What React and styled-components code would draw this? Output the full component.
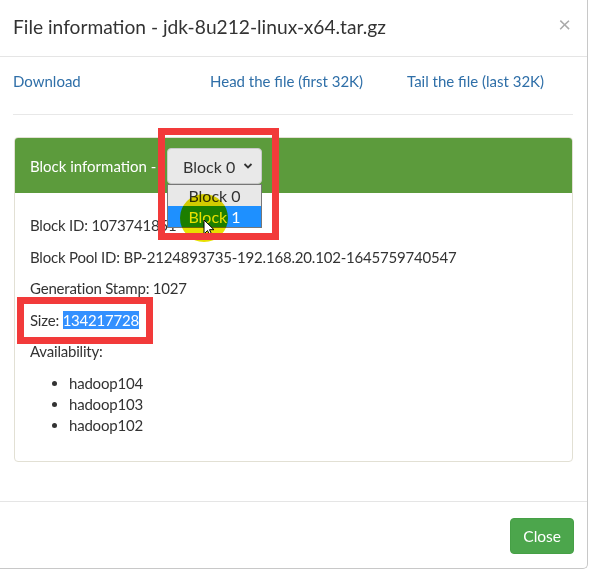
import styled, { createGlobalStyle } from "styled-components";

const GlobalStyle = createGlobalStyle`
  body {
    margin: 0;
    background: #fff;
    font-family: Lato, "Open Sans", sans-serif;
    color: #333;
  }
`;

const Modal = styled.div`
  width: 587px;
  height: 568px;
  display: flex;
  flex-direction: column;
  border-right: 1px solid #c8c8c8;
  border-bottom: 1px solid #c8c8c8;
  border-bottom-right-radius: 5px;
  background: #fff;
`;

const Header = styled.div`
  height: 56px;
  padding: 0 16px 0 13px;
  display: flex;
  align-items: center;
  justify-content: space-between;
  border-bottom: 1px solid #e5e5e5;
`;

const Title = styled.h4`
  margin: 0 0 4px;
  font-size: 19.2px;
  font-weight: 400;
  color: #333;
`;

const CloseX = styled.span`
  font-size: 22px;
  color: #aaa;
  line-height: 1;
  margin-bottom: 8px;
`;

const Body = styled.div`
  flex: 1;
  padding: 14px 14px 0 13px;
`;

const LinkRow = styled.div`
  display: grid;
  grid-template-columns: repeat(3, 197px);
  line-height: 21px;
`;

const Link = styled.a`
  color: #2f6fa8;
  font-size: 15px;
  text-decoration: none;
`;

const Rule = styled.hr`
  margin: 22px 0 22px;
  border: 0;
  border-top: 1px solid #e8e8e8;
`;

const Panel = styled.div`
  margin-left: 1px;
  border: 1px solid #e2e0d4;
  border-radius: 4px;
`;

const PanelHeading = styled.div`
  height: 55px;
  background: #5c9b3c;
  border-radius: 3px 3px 0 0;
  display: flex;
  align-items: center;
  padding: 0 15px;
  color: #fff;
  font-size: 15px;
`;

const HeadingText = styled.span`
  width: 137px;
  white-space: nowrap;
  overflow: hidden;
`;

const SelectWrap = styled.div`
  position: relative;
  margin-top: 1px;
`;

const Select = styled.div`
  width: 95px;
  height: 36px;
  box-sizing: border-box;
  background: #e9e9e9;
  border: 1px solid #c9c9c9;
  border-radius: 4px;
  display: flex;
  align-items: center;
  justify-content: space-between;
  padding: 0 8px 0 15px;
  color: #333;
  font-size: 16px;
`;

const Options = styled.div`
  position: absolute;
  top: 36px;
  left: 0;
  width: 95px;
  box-sizing: border-box;
  border: 1px solid #777;
  background: #e8e8e8;
  z-index: 2;
`;

const Option = styled.div`
  height: 21px;
  line-height: 21px;
  text-align: center;
  font-size: 16px;
  color: ${({ $active }) => ($active ? "#fff" : "#333")};
  background: ${({ $active }) => ($active ? "#1e90ff" : "transparent")};
`;

const Highlight = styled.div`
  position: absolute;
  left: 13px;
  top: 46px;
  width: 48px;
  height: 48px;
  border-radius: 50%;
  background: #e8e000;
  mix-blend-mode: multiply;
  z-index: 3;
  pointer-events: none;
`;

const Cursor = styled.svg`
  position: absolute;
  left: 36px;
  top: 71px;
  z-index: 4;
`;

const RedBox = styled.div`
  position: absolute;
  border: 7px solid #f23a3a;
  z-index: 5;
  pointer-events: none;
`;

const PanelBody = styled.div`
  padding: 22px 15px 15px;
  font-size: 15px;
  letter-spacing: -0.2px;
  line-height: 21px;
`;

const Line = styled.p`
  margin: 0 0 10.5px;
`;

const Marked = styled.span`
  position: relative;
`;

const Selected = styled.span`
  background: #3390ff;
  color: #fff;
`;

const HostList = styled.ul`
  margin: 0 0 10.5px;
  padding-left: 39px;
`;

const Footer = styled.div`
  height: 67px;
  border-top: 1px solid #e5e5e5;
  display: flex;
  justify-content: flex-end;
  align-items: flex-start;
  padding: 16px 13px 0;
  box-sizing: border-box;
`;

const Button = styled.button`
  height: 36px;
  padding: 0 12px;
  background: #4ca64c;
  border: 1px solid #46a046;
  border-radius: 4px;
  color: #fff;
  font-family: inherit;
  font-size: 15.5px;
`;

const hosts = ["hadoop104", "hadoop103", "hadoop102"];

export default function App() {
  return (
    <>
      <GlobalStyle />
      <Modal>
        <Header>
          <Title>File information - jdk-8u212-linux-x64.tar.gz</Title>
          <CloseX>×</CloseX>
        </Header>
        <Body>
          <LinkRow>
            <Link href="#">Download</Link>
            <Link href="#">Head the file (first 32K)</Link>
            <Link href="#">Tail the file (last 32K)</Link>
          </LinkRow>
          <Rule />
          <Panel>
            <PanelHeading>
              <HeadingText>Block information -</HeadingText>
              <SelectWrap>
                <Select>
                  Block 0
                  <svg width="10" height="8" viewBox="0 0 10 8">
                    <path d="M1.5 2l3.5 3.5L8.5 2" fill="none" stroke="#333" strokeWidth="1.8" />
                  </svg>
                </Select>
                <Options>
                  <Option>Block 0</Option>
                  <Option $active>Block 1</Option>
                </Options>
                <Highlight />
                <Cursor width="12" height="18" viewBox="0 0 12 18">
                  <path d="M1 1v14l3.5-3.5 2.5 5.5 2-1-2.5-5.3H11z" fill="#fff" stroke="#000" strokeWidth="1" />
                </Cursor>
                <RedBox style={{ left: -9, top: -20, width: 107, height: 98 }} />
              </SelectWrap>
            </PanelHeading>
            <PanelBody>
              <Line>Block ID: 1073741851</Line>
              <Line>Block Pool ID: BP-2124893735-192.168.20.102-1645759740547</Line>
              <Line>Generation Stamp: 1027</Line>
              <Line>
                <Marked>
                  Size: <Selected>134217728</Selected>
                  <RedBox style={{ left: -13, top: -14, width: 122, height: 33 }} />
                </Marked>
              </Line>
              <Line>Availability:</Line>
              <HostList>
                {hosts.map((h) => (
                  <li key={h}>{h}</li>
                ))}
              </HostList>
            </PanelBody>
          </Panel>
        </Body>
        <Footer>
          <Button>Close</Button>
        </Footer>
      </Modal>
    </>
  );
}
